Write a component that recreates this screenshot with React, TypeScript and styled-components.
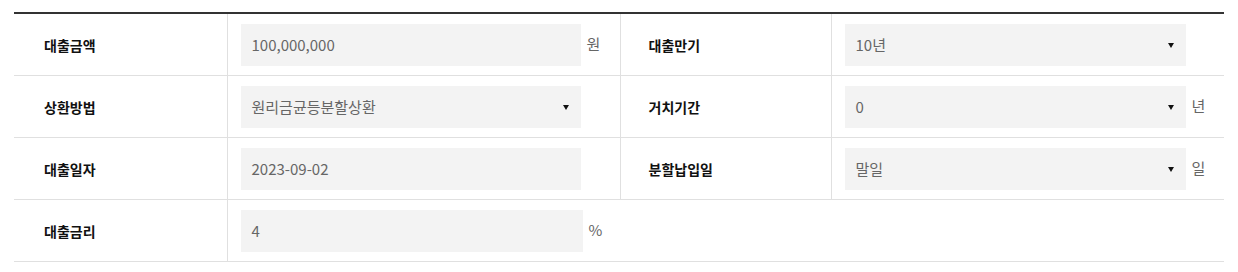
import React from "react";
import styled, { createGlobalStyle } from "styled-components";

const Global = createGlobalStyle`
  html, body { margin: 0; padding: 0; background: #fff; }
  body { font-family: "Noto Sans CJK KR", "Noto Sans", sans-serif; }
`;

const Wrap = styled.div`
  padding: 12px 14px 0 14px;
`;

const Table = styled.table`
  width: 1210px;
  border-collapse: collapse;
  table-layout: fixed;
  border-top: 2px solid #333;
`;

const Row = styled.tr`
  border-bottom: 1px solid #e0e0e0;
`;

const Label = styled.th<{ $inset: number }>`
  height: 61px;
  padding: 0 0 0 ${(p) => p.$inset}px;
  text-align: left;
  font-size: 14px;
  font-weight: 700;
  color: #111;
  border-right: 1px solid #e0e0e0;
  vertical-align: middle;
`;

const Value = styled.td<{ $divider?: boolean }>`
  height: 61px;
  padding: 0 0 0 13px;
  vertical-align: middle;
  border-right: ${(p) => (p.$divider ? "1px solid #e0e0e0" : "none")};
`;

const Field = styled.div`
  display: flex;
  align-items: center;
  gap: 6px;
`;

const Box = styled.div<{ $w: number }>`
  position: relative;
  width: ${(p) => p.$w}px;
  height: 42px;
  box-sizing: border-box;
  background: #f3f3f3;
  padding: 0 11px;
  display: flex;
  align-items: center;
  font-size: 15px;
  color: #666;
`;

const Arrow = styled.span`
  position: absolute;
  right: 12px;
  top: 50%;
  margin-top: -2px;
  width: 0;
  height: 0;
  border-left: 3px solid transparent;
  border-right: 3px solid transparent;
  border-top: 5px solid #111;
`;

const Unit = styled.span`
  font-size: 15px;
  color: #666;
  margin-top: -2px;
`;

const Input = ({ value, w = 341, select, unit }: { value: string; w?: number; select?: boolean; unit?: string }) => (
  <Field>
    <Box $w={w}>
      {value}
      {select && <Arrow />}
    </Box>
    {unit && <Unit>{unit}</Unit>}
  </Field>
);

export default function App() {
  return (
    <Wrap>
      <Global />
      <Table>
        <colgroup>
          <col style={{ width: 213 }} />
          <col style={{ width: 393 }} />
          <col style={{ width: 211 }} />
          <col style={{ width: 393 }} />
        </colgroup>
        <tbody>
          <Row>
            <Label $inset={30}>대출금액</Label>
            <Value $divider>
              <Input value="100,000,000" w={340} unit="원" />
            </Value>
            <Label $inset={28}>대출만기</Label>
            <Value>
              <Input value="10년" select />
            </Value>
          </Row>
          <Row>
            <Label $inset={30}>상환방법</Label>
            <Value $divider>
              <Input value="원리금균등분할상환" w={340} select />
            </Value>
            <Label $inset={28}>거치기간</Label>
            <Value>
              <Input value="0" select unit="년" />
            </Value>
          </Row>
          <Row>
            <Label $inset={30}>대출일자</Label>
            <Value $divider>
              <Input value="2023-09-02" w={340} />
            </Value>
            <Label $inset={28}>분할납입일</Label>
            <Value>
              <Input value="말일" select unit="일" />
            </Value>
          </Row>
          <Row>
            <Label $inset={30}>대출금리</Label>
            <Value colSpan={3}>
              <Input value="4" w={342} unit="%" />
            </Value>
          </Row>
        </tbody>
      </Table>
    </Wrap>
  );
}
